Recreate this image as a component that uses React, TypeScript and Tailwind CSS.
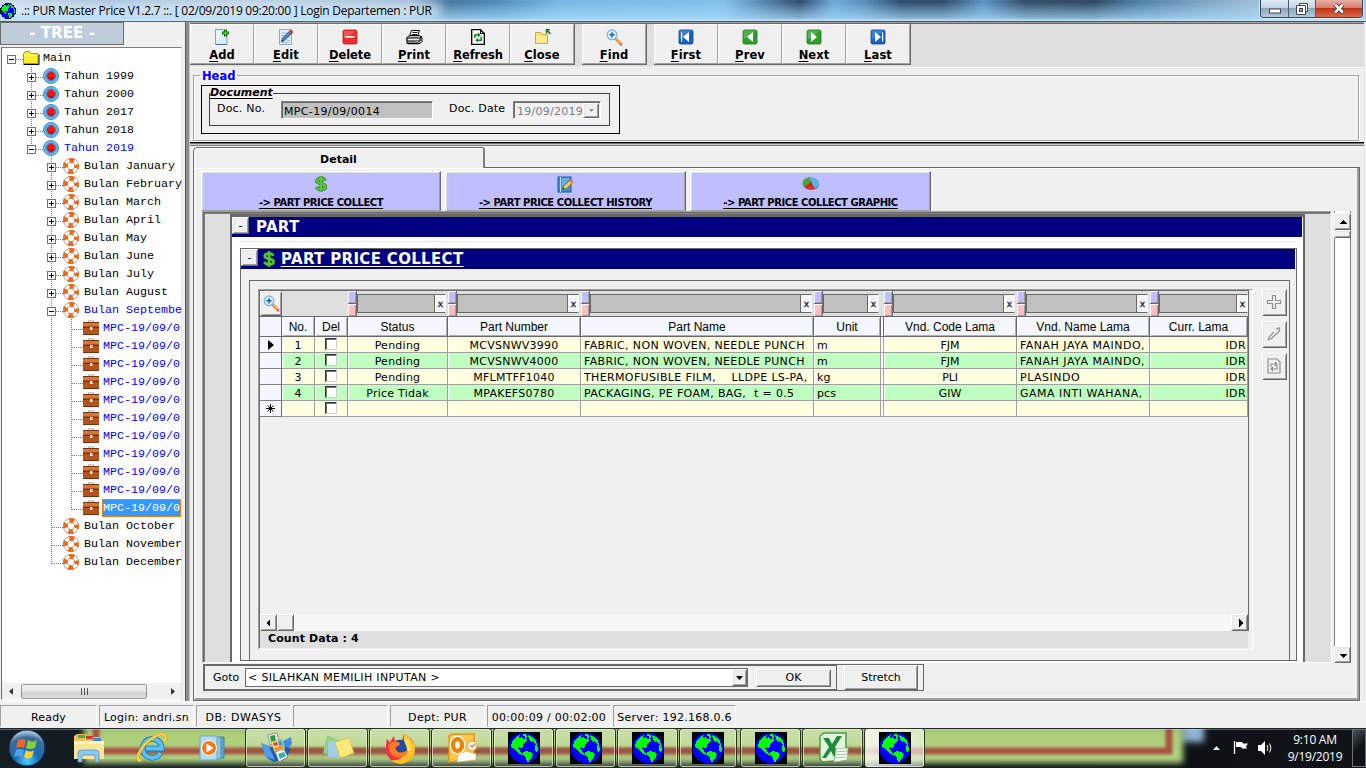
import React from "react";

const verdana = "font-['DejaVu_Sans','Verdana',sans-serif]";
const raised =
  "border border-t-white border-l-white border-r-[#696969] border-b-[#696969] bg-[#f0f0f0] shadow-[inset_1px_1px_0_#e6e6e6,inset_-1px_-1px_0_#a0a0a0]";

/* ---------- icons ---------- */

function Globe({ size = 32, square = false }: { size?: number; square?: boolean }) {
  return (
    <svg width={size} height={size} viewBox="0 0 32 32" shapeRendering="crispEdges" className="shrink-0">
      {square && <rect width="32" height="32" fill="#000" />}
      <circle cx="16" cy="16" r={square ? 15.500 : 16} fill={square ? "#00f" : "#001"} />
      <circle cx="16" cy="16" r="14.6" fill="#0000ff" />
      <path
        fill="#00ff00"
        d="M3 13l2-5 4-4 3-1-1 3 3-1 1 2 3-1 1 2-2 3-2 1v3l-2 1-2-1-1 2 2 1 1 3 2 1-1 1-4-2-3-4-3-1zM15 20l3-1 4 1 3 2-1 3-2 2-1 3-2 0-1-4-3-3zM20 3l4 2 4 4 1 3-2 0-2-3-2 1-2-3zM27 13l2-1 1 5-1 4-2-2z"
      />
      <path fill="#00ff00" d="M15 2h3v1h1v3h-2v-2h-2z" />
    </svg>
  );
}

function Dollar() {
  const d =
    "M12.3 4.800C11.400 3 9.600 2.500 7.800 2.500 5.500 2.500 3.800 3.500 3.800 5.300c0 3.500 8.700 1.800 8.700 5.200 0 1.900-1.900 3-4.300 3-2.200 0-4-.8-4.700-2.600M8.100.3v15.400";
  return (
    <svg width="16" height="16" viewBox="0 0 16 16" fill="none">
      <path d={d} stroke="#207a18" strokeWidth="3.300" />
      <path d={d} stroke="#5cc23c" strokeWidth="2.200" />
    </svg>
  );
}

function Find() {
  return (
    <svg width="17" height="17" viewBox="0 0 17 17" className="shrink-0">
      <path d="M9.500 9.500l6 6" stroke="#e88a1c" strokeWidth="3" />
      <path d="M10 9.500l5 5" stroke="#ffd08a" strokeWidth="1" />
      <path d="M14.500 16l1.500-.5" stroke="#c030c0" strokeWidth="1.500" />
      <circle cx="6" cy="5.800" r="4.800" fill="#d9f0fd" stroke="#86b4d8" strokeWidth="1.300" />
      <path d="M6 3.200v5.200M3.400 5.800h5.200" stroke="#1762b8" strokeWidth="1.500" />
    </svg>
  );
}

function Nav({ kind }: { kind: string }) {
  const blue = kind === "first" || kind === "last";
  const left = kind === "first" || kind === "prev";
  return (
    <svg width="16" height="16" viewBox="0 0 16 16">
      <rect x="1" y="1" width="14" height="14" rx="1.500" fill={blue ? "#1565c8" : "#2f9e2a"} stroke={blue ? "#0d3f86" : "#1a7a1a"} strokeWidth=".8" />
      <path d="M1.500 1.500h13l-13 9z" fill="#fff" opacity=".18" />
      <path d={left ? "M11 3v10L5 8z" : "M5 3v10l6-5z"} fill="#fff" />
      {blue && <rect x={left ? 3 : 12} y="3.500" width="1.200" height="9" fill="#fff" />}
    </svg>
  );
}

function ToolIcon({ name }: { name: string }) {
  switch (name) {
    case "Add":
      return (
        <svg width="16" height="16" viewBox="0 0 16 16">
          <path d="M1.500.500h8l3.500 4v11H1.500z" fill="#dcecfb" stroke="#7f9fc4" />
          <path d="M2.500 2h5L3 12z" fill="#fff" opacity=".8" />
          <path d="M13 15.500H2" stroke="#4d6f9a" />
          <path d="M11.500.500v7M8 4h7" stroke="#0a5a0a" strokeWidth="3" />
          <path d="M11.500 1.300v5.400M8.800 4h5.400" stroke="#46d32c" strokeWidth="1.300" />
        </svg>
      );
    case "Edit":
      return (
        <svg width="16" height="16" viewBox="0 0 16 16">
          <path d="M1.500.500h12v15h-12z" fill="#e4effb" stroke="#8fa6c6" />
          <path d="M3 4h6M3 6.500h5M3 9h3M9 11.500h3M3 13.500h8" stroke="#9db7d6" />
          <path d="M3.500 12.500l1-3.500L12 1.500l2.500 2.300L7 11.300z" fill="#4f83c8" stroke="#28456e" strokeWidth=".7" />
          <path d="M11 2.500L13 .6l2.300 2.200-1.900 2z" fill="#e03a20" />
          <path d="M3.300 12.700l.6-2 1.500 1.400z" fill="#222" />
        </svg>
      );
    case "Delete":
      return (
        <svg width="16" height="16" viewBox="0 0 16 16">
          <rect x="1" y="1" width="14" height="14" rx="1.500" fill="#ef2b2b" stroke="#c41414" strokeWidth=".8" />
          <path d="M2 2h12l-12 8z" fill="#fff" opacity=".2" />
          <rect x="3.500" y="7" width="9" height="1.600" fill="#fff" />
        </svg>
      );
    case "Print":
      return (
        <svg width="17" height="16" viewBox="0 0 17 16">
          <path d="M5.500 1.500h8l-2 6H3.500z" fill="#fff" stroke="#000" />
          <path d="M6.500 3.500h5M6 5.500h5" stroke="#000" strokeWidth=".9" />
          <path d="M1 8.500l2.500-2h10l2.500 2v4l-2 2H1z" fill="#bbb" stroke="#000" />
          <path d="M1 9h13v3H1zM14 9l2-2" fill="#eee" stroke="#000" />
          <rect x="9" y="12" width="3" height="1.500" fill="#1bd61b" />
          <path d="M2 14.500h11" stroke="#000" strokeWidth="1.500" />
        </svg>
      );
    case "Refresh":
      return (
        <svg width="14" height="16" viewBox="0 0 14 16">
          <path d="M.700.700h8.800l3.800 3.800v10.800H.7z" fill="#fff" stroke="#000" strokeWidth="1.300" />
          <path d="M9.500.700v3.800h3.800" fill="none" stroke="#000" />
          <path d="M3.800 9V6h4M10.200 7.500v3.700H6" fill="none" stroke="#12851c" strokeWidth="1.500" />
          <path d="M7 3.500L9.800 6 7 8.300zM7 8.900l-2.800 2.300L7 13.600z" fill="#12851c" />
        </svg>
      );
    case "Close":
      return (
        <svg width="17" height="16" viewBox="0 0 17 16">
          <path d="M1.500 14.500v-11h5l1.500 2h5.500v9z" fill="#ffe680" stroke="#d2a72c" />
          <path d="M2 7h11v7H2z" fill="#fff0a0" opacity=".5" />
          <path d="M12 .5h4M12.500 0v4.500M13 1l3.500 4" stroke="#1a7a1a" strokeWidth="1.500" />
        </svg>
      );
    case "Find":
      return <Find />;
    default:
      return <Nav kind={name.toLowerCase()} />;
  }
}

function NotePen() {
  return (
    <svg width="17" height="17" viewBox="0 0 17 17">
      <rect x="1" y="1" width="13" height="15" fill="#3a8fd6" stroke="#1c5c98" />
      <path d="M3.500 1v15" stroke="#bfe0f8" />
      <path d="M5 2h8L5 11z" fill="#8cc6f0" opacity=".6" />
      <path d="M6 13.500l1-3.500 6.500-6 2.300 2.200-6.500 6.300z" fill="#ffc94a" stroke="#b0701a" strokeWidth=".6" />
      <path d="M12.500 4.700l1.500-1.500 2.300 2.300-1.300 1.400z" fill="#e86a2a" />
      <path d="M5.700 13.800l.8-2 1.400 1.300z" fill="#222" />
    </svg>
  );
}

function Pie() {
  return (
    <svg width="18" height="16" viewBox="0 0 18 16">
      <ellipse cx="9" cy="8.500" rx="8" ry="5.500" fill="#777" />
      <ellipse cx="9" cy="7" rx="8" ry="5.800" fill="#58b4ea" />
      <path d="M9 6.500L8 1.200A8 5.800 0 0 0 2.200 10.500z" fill="#46a832" />
      <path d="M9 5.500L2.500 10.500A8 5.800 0 0 0 12.500 13z" fill="#ee2a1a" />
      <path d="M9 5.500v2.500l3 4M9 8l-4 3" stroke="#7c1008" fill="none" strokeWidth=".7" />
    </svg>
  );
}

/* ---------- tree ---------- */

type Node = { label: string; level: number; exp?: "+" | "-"; blue?: boolean; sel?: boolean; lines: number[]; last?: boolean };

const months = ["January", "February", "March", "April", "May", "June", "July", "August"];
const nodes: Node[] = [
  { label: "Main", level: 0, exp: "-", lines: [] },
  ...["1999", "2000", "2017", "2018"].map((y) => ({ label: "Tahun " + y, level: 1, exp: "+" as const, lines: [31] })),
  { label: "Tahun 2019", level: 1, exp: "-", blue: true, lines: [31], last: true },
  ...months.map((m) => ({ label: "Bulan " + m, level: 2, exp: "+" as const, lines: [51] })),
  { label: "Bulan Septembe", level: 2, exp: "-", blue: true, lines: [51] },
  ...Array.from({ length: 11 }, (_, i) => ({ label: "MPC-19/09/0", level: 3, blue: true, sel: i === 10, lines: [51, 71], last: i === 10 })),
  { label: "Bulan October", level: 2, lines: [51] },
  { label: "Bulan November", level: 2, lines: [51] },
  { label: "Bulan December", level: 2, lines: [51], last: true },
];

function NodeArt({ n }: { n: Node }) {
  const ex = 12 + 20 * n.level;
  const ix = 23 + 20 * n.level;
  return (
    <svg width={100} height={18} viewBox="0 0 100 18" className="absolute top-0 left-0">
      {n.lines.map((x, i) => (
        <line
          key={x}
          x1={x - 1.5}
          x2={x - 1.5}
          y1={0}
          y2={n.last && i === n.lines.length - 1 ? 11 : 18}
          stroke="#777"
          strokeDasharray="1 1"
        />
      ))}
      <line x1={ex - 2} x2={ix} y1={10.5} y2={10.5} stroke="#777" strokeDasharray="1 1" />
      {n.exp && (
        <g>
          <rect x={ex - 6.5} y={6.500} width="8" height="8" fill="#fff" stroke="#707070" />
          <path d={`M${ex - 5} 10.500h5`} stroke="#000" />
          {n.exp === "+" && <path d={`M${ex - 2.5} 8v5`} stroke="#000" />}
        </g>
      )}
      <g transform={`translate(${ix - 2} 1)`}>
        {n.level === 0 && (
          <g>
            <path d="M.500 13.500v-10l2-2h4l1.500 2h7v10z" fill="#f6ee30" stroke="#999936" />
            <path d="M.500 14.500h15.500v-10" stroke="#000" fill="none" />
            <path d="M1.500 5.500h13" stroke="#fffbb0" />
          </g>
        )}
        {n.level === 1 && (
          <g>
            <circle cx="8" cy="8" r="7.600" fill="#62b8ec" stroke="#2c80bf" strokeWidth=".8" />
            <circle cx="8" cy="8" r="4.800" fill="#8ed0f4" stroke="#2a86c8" strokeWidth="1" />
            <circle cx="8" cy="8" r="4.200" fill="#f01414" />
            <path d="M5 9.500a4 4 0 0 0 6 0" stroke="#a00" fill="none" />
          </g>
        )}
        {n.level === 2 && (
          <g fill="none">
            <circle cx="8" cy="8" r="5.600" stroke="#999" strokeWidth="4.800" />
            <circle cx="8" cy="8" r="5.600" stroke="#fff" strokeWidth="3.400" />
            <circle cx="8" cy="8" r="5.600" stroke="#ee6a18" strokeWidth="4.800" strokeDasharray="4.800 3.996" strokeDashoffset="2.400" />
          </g>
        )}
        {n.level === 3 && (
          <g>
            <path d="M5.500 3V.800h5V3" fill="none" stroke="#9fb0bd" />
            <rect x="0" y="2" width="16" height="13" fill="#b4531e" />
            <path d="M0 3h16v3H0z" fill="#d07a3a" />
            <path d="M0 7.500h16M0 14.500h16M0 2.500h16" stroke="#7a300e" />
            <rect x="7" y="7" width="2.500" height="3" fill="#eee" />
          </g>
        )}
      </g>
    </svg>
  );
}

function Tree() {
  return (
    <div className="flex h-[679px] w-[185px] shrink-0 flex-col bg-[#f0f0f0]">
      <div className={`h-[23px] w-[124px] border border-[#696969] bg-[#bfcddb] text-center text-[15px] leading-[20px] font-bold tracking-[0.1px] text-white ${verdana}`}>
        - TREE -
      </div>
      <div className="mt-[2px] ml-[1px] flex h-[653px] w-[181px] flex-col border border-t-[#808080] border-r-[#e3e3e3] border-b-white border-l-[#696969] bg-white">
        <div className="mt-[1px] h-[635px] font-['Liberation_Mono','Courier_New',monospace] text-[11.67px] leading-[19px] whitespace-pre">
          {nodes.map((n, i) => (
            <div key={i} className="relative flex h-[18px]">
              <NodeArt n={n} />
              <span
                className={[
                  ["ml-[41px]", "ml-[62px]", "ml-[82px]", "ml-[100px]"][n.level],
                  n.sel ? "h-[18px] w-[79px] border border-dotted border-[#f09020] bg-[#3399ff] leading-[17px] text-white" : n.blue ? "text-[#0000ff]" : "text-black",
                  n.level === 3 && !n.sel ? "pl-[1px]" : "",
                ].join(" ")}
              >
                {n.label}
              </span>
            </div>
          ))}
        </div>
        <div className="flex h-[16px] items-center bg-[#f0f0f0]">
          <svg width="19" height="9" viewBox="0 0 19 9">
            <path d="M11 1v7L7 4.500z" fill="#333" />
          </svg>
          <div className="flex h-[15px] w-[126px] items-center justify-center gap-[2px] rounded-[2px] border border-[#979797] bg-[linear-gradient(#f4f4f4,#e4e4e4_50%,#cfcfcf_51%,#dcdcdc)]">
            {[0, 1, 2].map((k) => (
              <span key={k} className="h-[7px] w-[1px] bg-[#555]" />
            ))}
          </div>
          <svg width="34" height="9" viewBox="0 0 34 9">
            <path d="M24 1v7l4-3.500z" fill="#333" />
          </svg>
        </div>
      </div>
    </div>
  );
}

/* ---------- toolbar and head ---------- */

const groups: { items: string[]; cls: string }[] = [
  { items: ["Add", "Edit", "Delete", "Print", "Refresh", "Close"], cls: "" },
  { items: ["Find"], cls: "ml-[7px]" },
  { items: ["First", "Prev", "Next", "Last"], cls: "ml-[7px]" },
];

function Toolbar() {
  return (
    <div className="flex h-[43px] bg-[#dfdfdf]">
      {groups.map((g, i) => (
        <div key={i} className={`flex h-[41px] border-r border-b border-[#696969] bg-[#f0f0f0] ${g.cls}`}>
          {g.items.map((t) => (
            <div
              key={t}
              className="flex w-[64px] flex-col items-center border border-t-white border-r-[#a0a0a0] border-b-[#a0a0a0] border-l-white pt-[4px]"
            >
              <div className="flex h-[16px] shrink-0 items-center">
                <ToolIcon name={t} />
              </div>
              <span className={`mt-px shrink-0 text-[11.5px] leading-[18px] font-bold ${t === "Refresh" || t === "Delete" ? "tracking-[-0.1px]" : "tracking-[0.1px]"}`}>
                <span className="underline underline-offset-2">{t[0]}</span>
                {t.slice(1)}
              </span>
            </div>
          ))}
        </div>
      ))}
    </div>
  );
}

function Head() {
  return (
    <div className="h-[73px] bg-[#f0f0f0] pt-[6px] pl-[3px]">
      <div className="relative h-[66px] w-[1166px] border border-[#a0a0a0] pt-[9px] pl-[7px] shadow-[inset_1px_1px_0_#fff,1px_1px_0_#fff]">
        <span className="absolute -top-[7px] left-[6px] bg-[#f0f0f0] px-[2px] text-[11.5px] leading-[15px] font-bold text-[#0000ff]">Head</span>
        <div className="h-[49px] w-[419px] border border-black pt-[7px] pl-[7px]">
          <div className="relative flex h-[33px] w-[401px] border border-[#404040] text-[11px]">
            <span className="absolute -top-[8px] left-0 bg-[#f0f0f0] text-[11px] leading-[14px] font-bold tracking-[-0.05px] italic underline underline-offset-2">Document</span>
            <span className="mt-[7px] ml-[7px] w-[64px] leading-[15px] tracking-[0.2px]">Doc. No.</span>
            <span className="mt-[7px] h-[18px] w-[152px] border border-t-[#808080] border-r-white border-b-white border-l-[#808080] bg-[#c0c0c0] pl-[2px] text-[11px] leading-[19px] tracking-[0.35px] shadow-[inset_1px_1px_0_#696969]">
              MPC-19/09/0014
            </span>
            <span className="mt-[7px] ml-[16px] w-[64px] leading-[15px] tracking-[0.2px]">Doc. Date</span>
            <span className="mt-[7px] flex h-[18px] w-[88px] border border-t-[#808080] border-r-white border-b-white border-l-[#808080] pl-[3px] leading-[20px] text-[#808080] shadow-[inset_1px_1px_0_#696969]">
              <span className="w-[66px] tracking-[0.25px]">19/09/2019</span>
              <span className={`mt-px flex h-[15px] w-[16px] items-center justify-center ${raised}`}>
                <svg width="5" height="3" viewBox="0 0 5 3">
                  <path d="M0 0h5L2.500 3z" fill="#909090" />
                </svg>
              </span>
            </span>
          </div>
        </div>
      </div>
    </div>
  );
}

/* ---------- data grid ---------- */

const colW = ["w-[33px]", "w-[33px]", "w-[100px]", "w-[133px]", "w-[233px]", "w-[67px]", "w-[136px]", "w-[133px]", "w-[98px]"];
const heads = ["No.", "Del", "Status", "Part Number", "Part Name", "Unit", "Vnd. Code Lama", "Vnd. Name Lama", "Curr. Lama"];
const data = [
  ["1", "", "Pending", "MCVSNWV3990", "FABRIC, NON WOVEN, NEEDLE PUNCH", "m", "FJM", "FANAH JAYA MAINDO,", "IDR"],
  ["2", "", "Pending", "MCVSNWV4000", "FABRIC, NON WOVEN, NEEDLE PUNCH", "m", "FJM", "FANAH JAYA MAINDO,", "IDR"],
  ["3", "", "Pending", "MFLMTFF1040", "THERMOFUSIBLE FILM,    LLDPE LS-PA,", "kg", "PLI", "PLASINDO", "IDR"],
  ["4", "", "Price Tidak", "MPAKEFS0780", "PACKAGING, PE FOAM, BAG,  t = 0.5", "pcs", "GIW", "GAMA INTI WAHANA,", "IDR"],
  ["", "", "", "", "", "", "", "", ""],
];
const align = ["justify-center", "justify-center", "justify-center", "justify-center", "justify-start pl-[3px]", "justify-start pl-[3px]", "justify-center", "justify-start pl-[3px]", "justify-end pr-[1px]"];
const track = ["", "", "tracking-[0.25px]", "tracking-[0.25px]", "tracking-[0.36px]", "tracking-[0.1px]", "tracking-[-0.1px]", "tracking-[0.5px]", "tracking-[0.4px]"];

function FilterCell({ w, tail }: { w: string; tail?: boolean }) {
  return (
    <div className={`flex h-[25px] ${w}`}>
      <div className="flex w-[9px] flex-col border-r border-[#696969]">
        <span className="h-[12px] border-t border-l border-white bg-[#bfbfff] shadow-[inset_-1px_-1px_0_#a0a0a0]" />
        <span className="h-px bg-[#696969]" />
        <span className="h-[12px] border-t border-l border-white bg-[#ffbfbf] shadow-[inset_-1px_-1px_0_#a0a0a0]" />
      </div>
      <div className={`mt-[3px] flex h-[19px] grow border border-[#696969] border-r-white bg-[#c0c0c0] ${tail ? "mr-0" : "mr-[2px]"}`}>
        <span className="grow border-r border-[#696969]" />
        <span className="w-[10px] border-l border-white bg-[#f6f6f6] text-center text-[9px] leading-[19px] text-[#101038] [-webkit-text-stroke:0.3px_#101038]">x</span>
      </div>
    </div>
  );
}

function Grid() {
  return (
    <div className="flex h-[361px] w-[995px] flex-col border border-t-[#a0a0a0] border-r-white border-b-white border-l-[#a0a0a0]">
      <div className="flex h-[341px] w-[990px] flex-col border border-b-0 border-[#696969]">
        <div className="flex h-[25px] bg-[#dfdfdf]">
          <div className={`flex w-[22px] items-center justify-center ${raised}`}>
            <Find />
          </div>
          <div className="w-[66px]" />
          {colW.slice(2).map((w, i) => (
            <FilterCell key={i} w={i === 4 ? "w-[136px] pl-[3px]" : w} tail={i === 6} />
          ))}
        </div>
        <div className="flex h-[21px] border-t border-b border-[#696969] bg-[#f4f7fd] font-['Liberation_Sans',Arial,sans-serif] text-[12px]">
          <div className="w-[22px] shrink-0 border-r border-[#696969]" />
          {heads.map((h, i) => (
            <div key={h} className={`flex shrink-0 ${colW[i]}`}>
              {i === 6 && <span className="w-[3px] border-r border-[#696969] bg-white" />}
              <span className="flex grow items-center justify-center border-r border-[#696969] shadow-[inset_1px_1px_0_#fff,inset_-1px_-1px_0_#b0b0b8]">{h}</span>
            </div>
          ))}
        </div>
        {data.map((r, ri) => (
          <div key={ri} className={`flex h-[16px] text-[11px] leading-[17px] whitespace-pre ${ri % 2 ? "bg-[#bfffbf]" : "bg-[#ffffdf]"}`}>
            <div className="flex w-[22px] shrink-0 items-center justify-center border-r border-b border-[#696969] border-b-[#808080] bg-[#f4f7fd] shadow-[inset_1px_1px_0_#fff]">
              {ri === 0 && (
                <svg width="6" height="10" viewBox="0 0 6 10">
                  <path d="M0 0v10l6-5z" fill="#000" />
                </svg>
              )}
              {ri === 4 && (
                <svg width="9" height="9" viewBox="0 0 9 9">
                  <path d="M4.500 0v9M0 4.500h9M1.500 1.500l6 6M7.500 1.500l-6 6" stroke="#000" strokeWidth="1" />
                </svg>
              )}
            </div>
            {r.map((c, i) => (
              <div key={i} className={`flex shrink-0 ${colW[i]}`}>
                {i === 6 && <span className="w-[3px] border-r border-b border-[#a0a0a0] bg-white" />}
                <span className={`flex min-w-0 grow border-r border-b border-[#a0a0a0] shadow-[inset_1px_0_0_#fff] ${align[i]} ${track[i]}`}>
                  {i === 1 ? (
                    <span className="mt-[1px] h-[12px] w-[12px] border border-t-[#303030] border-r-[#d0d0d0] border-b-[#d0d0d0] border-l-[#303030] bg-white shadow-[inset_1px_1px_0_#777]" />
                  ) : (
                    c
                  )}
                </span>
              </div>
            ))}
          </div>
        ))}
        <div className="grow" />
        <div className="flex h-[17px] justify-between bg-[repeating-conic-gradient(#ffffff_0_25%,#f0f0f0_0_50%)] bg-[length:2px_2px]">
          <div className="flex">
            <Arrow dir="left" />
            <div className={`h-[17px] w-[17px] ${raised}`} />
          </div>
          <Arrow dir="right" />
        </div>
      </div>
      <div className="h-[17px] w-[989px] border-l border-[#696969] bg-[#dfdfdf] pl-[8px] text-[11px] leading-[15px] font-bold tracking-[0.1px]">Count Data : 4</div>
    </div>
  );
}

function Arrow({ dir }: { dir: "left" | "right" | "up" | "down" }) {
  const d = { left: "M8 3v8L4 7z", right: "M6 3v8l4-4z", up: "M3 9h8L7 5z", down: "M3 6h8l-4 4z" }[dir];
  return (
    <div className={`flex h-[17px] w-[17px] shrink-0 items-center justify-center ${raised}`}>
      <svg width="14" height="14" viewBox="0 0 14 14" shapeRendering="crispEdges">
        <path d={d} fill="#000" />
      </svg>
    </div>
  );
}

function SideButtons() {
  return (
    <div className="ml-[9px] flex flex-col gap-[5px]">
      {[0, 1, 2].map((k) => (
        <div key={k} className={`flex h-[27px] w-[25px] items-center justify-center pr-[2px] pb-[2px] ${raised}`}>
          <svg width="16" height="16" viewBox="0 0 16 16" fill="none" stroke="#909090" strokeWidth="1.200" className="shrink-0">
            {k === 0 && <path d="M6.500 1.500h3v5h5v3h-5v5h-3v-5h-5v-3h5z" />}
            {k === 1 && <path d="M2 14l1.500-3.500L8 6M2 14l3.500-1.500L14 4.500M10 2.500l2 1M11 2h2.500v3" />}
            {k === 2 && <path d="M2 1h9l3 3v11H2zM5 9V6h5M11 7v4H6M9 4l2 2-2 2M7 9l-2 2 2 2" />}
          </svg>
        </div>
      ))}
    </div>
  );
}

/* ---------- detail page ---------- */

const links = [
  { t: "-> PART PRICE COLLECT", icon: <Dollar />, w: "w-[240px]" },
  { t: "-> PART PRICE COLLECT HISTORY", icon: <NotePen />, w: "ml-[4px] w-[241px]" },
  { t: "-> PART PRICE COLLECT GRAPHIC", icon: <Pie />, w: "ml-[4px] w-[241px]" },
];

function Minus() {
  return <div className={`flex h-[17px] w-[17px] shrink-0 items-center justify-center text-[11px] leading-none text-black ${raised}`}>-</div>;
}

function Viewport() {
  return (
    <div className="ml-px h-[452px] w-[1130px] border-t border-r border-b border-l border-t-[#a0a0a0] border-r-white border-b-white border-l-[#a0a0a0]">
      <div className="h-[450px] border border-r-[#e3e3e3] border-b-0 border-[#696969] bg-[#dfdfdf]">
        <div className="flex h-[449px] flex-col border-t border-l border-[#808080] pl-[25px]">
          <div className="h-[448px] w-[1075px] overflow-hidden border-t-3 border-r-2 border-l-2 border-[#696969] bg-white">
            <div className="flex h-[20px] w-[1070px] bg-[#000080]">
              <Minus />
              <span className="ml-[7px] text-[15px] leading-[20px] font-bold tracking-[0.3px] text-white">PART</span>
            </div>
            <div className="mt-[4px] ml-[8px] h-px w-[1057px] bg-[#e8e8e8]" />
            <div className="mt-[6px] ml-[8px] h-[413px] w-[1057px] border border-[#696969] bg-[#f0f0f0]">
              <div className="flex h-[20px] w-[1054px] items-start bg-[#000080]">
                <Minus />
                <span className="mt-[2px] ml-[3px]">
                  <Dollar />
                </span>
                <span className="ml-[4px] text-[15px] leading-[20px] font-bold tracking-[0.33px] text-white underline underline-offset-2">PART PRICE COLLECT</span>
              </div>
              <div className="mt-[11px] ml-[8px] flex h-[381px] w-[1041px] items-start border border-[#696969] pt-[8px] pl-[8px]">
                <Grid />
                <SideButtons />
              </div>
            </div>
          </div>
        </div>
      </div>
    </div>
  );
}

function GotoBar() {
  return (
    <div className="mt-px ml-[2px] flex h-[27px] w-[721px] border border-[#696969] text-[11px] leading-[17px]">
      <div className="flex w-[633px] items-center border border-r border-[#696969] pl-[8px]">
        <span className="w-[32px] pb-px">Goto</span>
        <div className="flex h-[19px] w-[503px] border border-[#696969] bg-white pl-[2px] leading-[18px]">
          <span className="grow tracking-[0.35px]">&lt; SILAHKAN MEMILIH INPUTAN &gt;</span>
          <span className={`flex w-[15px] items-center justify-center ${raised}`}>
            <svg width="7" height="4" viewBox="0 0 7 4">
              <path d="M0 0h7L3.500 4z" fill="#000" />
            </svg>
          </span>
        </div>
        <div className={`ml-[8px] flex h-[18px] w-[75px] items-center justify-center ${raised}`}>OK</div>
      </div>
      <div className="w-[7px]" />
      <div className={`flex w-[74px] items-center justify-center ${raised}`}>Stretch</div>
    </div>
  );
}

function Detail() {
  return (
    <div className="h-[555px] bg-[#f0f0f0] pt-px pl-[3px]">
      <div className="flex h-[21px]">
        <div className="flex h-[21px] w-[292px] items-center justify-center rounded-tl-[5px] rounded-tr-[3px] border-t border-r-2 border-l border-t-[#696969] border-r-[#808080] border-l-[#696969] text-[11px] font-bold shadow-[inset_1px_1px_0_#fff]">
          <span className="pt-[4px]">Detail</span>
        </div>
        <div className="w-[875px] border-b border-[#696969]" />
      </div>
      <div className="flex h-[533px] w-[1167px] flex-col border-r border-b border-l border-[#696969]">
        <div className="flex h-[532px] flex-col border-r-2 border-b-2 border-l border-r-[#a0a0a0] border-b-[#a0a0a0] border-l-white pt-[3px] pl-[6px] shadow-[inset_0_1px_0_#fff]">
          <div className="flex h-[40px]">
            {links.map((l) => (
              <div
                key={l.t}
                className={`flex h-[40px] flex-col items-center border border-t-white border-r-[#696969] border-b-[#a0a0a0] border-l-white bg-[#bfbfff] pt-[3px] shadow-[inset_-1px_0_0_#a0a0a0,inset_1px_1px_0_#dfdfdf] ${l.w}`}
              >
                <span className="flex h-[18px] items-center">{l.icon}</span>
                <span className="mt-[3px] text-[10px] leading-[13px] font-bold tracking-[-0.45px] whitespace-nowrap underline underline-offset-2">{l.t}</span>
              </div>
            ))}
          </div>
          <div className="flex">
            <Viewport />
            <div className="ml-[2px] flex h-[452px] w-[17px] flex-col border-r border-l border-[#808080] bg-white pt-[2px]">
              <div className="-mx-px flex grow flex-col justify-between">
                <div>
                  <Arrow dir="up" />
                  <div className={`h-[8px] w-[17px] ${raised}`} />
                </div>
                <Arrow dir="down" />
              </div>
            </div>
          </div>
          <GotoBar />
          <div className="mt-px ml-px h-px w-[1151px] bg-[#e3e3e3]" />
        </div>
      </div>
    </div>
  );
}

/* ---------- bottom ---------- */

const status = [
  { t: "Ready", w: "w-[97px] tracking-[0.2px]" },
  { t: "Login: andri.sn", w: "w-[95px] tracking-[0.25px]" },
  { t: "DB: DWASYS", w: "w-[95px] tracking-[0.6px]" },
  { t: "", w: "w-[95px]" },
  { t: "Dept: PUR", w: "w-[95px] tracking-[0.3px]" },
  { t: "00:00:09 / 00:02:00", w: "w-[124px] tracking-[0.25px]" },
  { t: "Server: 192.168.0.6", w: "w-[123px] tracking-[0.27px]" },
];

function TaskIcon({ k }: { k: string }) {
  switch (k) {
    case "folder":
      return (
        <svg width="34" height="32" viewBox="0 0 34 32">
          <path d="M2 27V4l3-2h9l2 3h13l2 3v19z" fill="#e9bf58" />
          <path d="M6 3h7v3H6z" fill="#3fae49" />
          <path d="M14 4h7v3h-7z" fill="#d23c2a" />
          <path d="M21 6h8v3h-8z" fill="#3c86d6" />
          <path d="M2 9h30v18H2z" fill="#fbe59a" />
          <path d="M2 9h30v3H2z" fill="#fdf3c4" />
          <path d="M6 30v-9q0-3 3-3h15q3 0 3 3v9h-4v-6q0-1-1-1H11q-1 0-1 1v6z" fill="#8cc9ef" stroke="#4f94c4" strokeWidth=".8" />
        </svg>
      );
    case "ie":
      return (
        <svg width="32" height="32" viewBox="0 0 32 32">
          <path d="M24.500 21a9.500 9.500 0 1 1 1.200-4.500H10" fill="none" stroke="#1a7cc4" strokeWidth="5.600" />
          <path d="M24.500 21a9.500 9.500 0 1 1 1.200-4.500H10" fill="none" stroke="#5cc0f2" strokeWidth="3.800" />
          <path d="M5 28C-2 31 3 15 15 7S32 2 28 10" fill="none" stroke="#d99a10" strokeWidth="3.200" />
          <path d="M5 28C-2 31 3 15 15 7S32 2 28 10" fill="none" stroke="#ffd84a" strokeWidth="2" />
        </svg>
      );
    case "media":
      return (
        <svg width="30" height="28" viewBox="0 0 30 28">
          <path d="M10 4l17-1v21l-17 1z" fill="#5fa6cf" stroke="#3d7ea8" />
          <path d="M7 3l17 0v22H7z" fill="#8cc6e6" stroke="#4a8fb8" />
          <path d="M3 2h17v24H3z" fill="#b4dcf0" stroke="#6aa6c8" />
          <circle cx="12" cy="14" r="7.500" fill="#f27a1a" stroke="#fff" />
          <path d="M9.500 9.500v9l7-4.500z" fill="#fff" />
        </svg>
      );
    case "scan":
      return (
        <svg width="34" height="32" viewBox="0 0 34 32">
          <path d="M2 11l8 3 6 14-9-3zM24 9l8-4 1 7-7 8z" fill="#3d8fe4" />
          <path d="M4 13l8 2 16 0 4 2-6 10-11 3-7-4z" fill="#1a5cb0" />
          <path d="M9 3l9-2 2 9-9 3z" fill="#f2f6f2" stroke="#777" strokeWidth=".7" />
          <path d="M11 4l5-1 1 6-5 1z" fill="#2e9a40" />
          <path d="M12 10l11-3 3 10-10 4z" fill="#ffe080" stroke="#999" strokeWidth=".7" />
          <path d="M14 11l4-1 1 3-4 1z" fill="#e04028" />
          <path d="M19 9l3-1 2 5-4 1z" fill="#38a0e8" />
          <path d="M15 16l9-3 1 3-9 3z" fill="#f09030" />
          <path d="M16 20l9-3 4 8-9 5z" fill="#eef6fc" stroke="#666" strokeWidth=".7" />
          <path d="M19 22l6-2 2 4-6 3z" fill="#35b0a0" />
          <path d="M2 11l8 3 6 14-9-3z" fill="#4f9cf0" />
        </svg>
      );
    case "notes":
      return (
        <svg width="34" height="30" viewBox="0 0 34 30">
          <path d="M6 2l16 7-7 14L2 20z" fill="#8ed08a" />
          <path d="M7 8h14v16H7z" fill="#a4cdf0" opacity=".9" />
          <path d="M14 9l14-4 5 15-14 5z" fill="#ffe87a" stroke="#d8b030" strokeWidth=".6" />
        </svg>
      );
    case "firefox":
      return (
        <svg width="32" height="32" viewBox="0 0 32 32">
          <path d="M3 7l3 3 4-6 1 5 7-1 2-6c7 3 11 8 11 15a14.500 14.500 0 0 1-29 0c0-4 0-7 1-10z" fill="#f0304a" />
          <path d="M20 2c7 3 11 9 11 15a14.500 14.500 0 0 1-24 11c9 1 14-3 14-11z" fill="#ffc02a" />
          <circle cx="16" cy="16" r="8.200" fill="#2448a4" />
          <path d="M5 12c3-3 7-3 9-2 3 1 2 3 0 4-3 1-3 3-1 5 3 3 7 1 11-1-1 6-7 9-13 7C6 22 4 17 5 12z" fill="#ff7a20" />
          <path d="M20 4c5 3 8 8 7 15l-4 0c1-5-4-8-3-15z" fill="#ffe04a" />
        </svg>
      );
    case "outlook":
      return (
        <svg width="32" height="30" viewBox="0 0 32 30">
          <path d="M3 3l3-2h22v25L3 29z" fill="#fbc94a" stroke="#e8960c" strokeWidth="1.500" />
          <path d="M12 22l8-4 10 3v6l-19 2z" fill="#fff" stroke="#d0b070" strokeWidth=".8" />
          <ellipse cx="11.500" cy="12" rx="4.500" ry="6" fill="#fff" stroke="#fff" strokeWidth="7" />
          <ellipse cx="11.500" cy="12" rx="4.500" ry="6" fill="#fff" stroke="#e8860c" strokeWidth="4.500" />
          <circle cx="26" cy="13" r="4.800" fill="#fff5e0" stroke="#e0a030" />
          <path d="M24 12l2 2 2.500-3" fill="none" stroke="#e03020" />
        </svg>
      );
    case "excel":
      return (
        <svg width="32" height="32" viewBox="0 0 32 32">
          <path d="M3 4l4-3h22v27l-24 2-2-3z" fill="#e4f3de" stroke="#4e9a44" strokeWidth="1.500" />
          <path d="M6 6h6l3 6 5-8h5l-7 11 5 10h-6l-3-6-5 7H5l7-11z" fill="#1f8a38" />
          <path d="M19 17l12-1-1 12-13 2z" fill="#f8fcf8" stroke="#8aba84" strokeWidth=".7" />
          <path d="M18 20l12-1M18 23l12-1M17 26l12-1" stroke="#8aba84" strokeWidth=".8" />
        </svg>
      );
    default:
      return <Globe size={32} square />;
  }
}

const tasks: { k: string; w: string; active?: boolean }[] = [
  { k: "scan", w: "w-[59px]" },
  { k: "notes", w: "ml-[3px] w-[59px]" },
  { k: "firefox", w: "ml-[3px] w-[59px]" },
  { k: "outlook", w: "ml-[3px] w-[59px]" },
  { k: "g", w: "ml-[3px] w-[59px]" },
  { k: "g", w: "ml-[3px] w-[59px]" },
  { k: "g", w: "ml-[3px] w-[59px]" },
  { k: "g", w: "ml-[3px] w-[56px]" },
  { k: "g", w: "ml-[5px] w-[59px]" },
  { k: "excel", w: "ml-[3px] w-[59px]" },
  { k: "g", w: "ml-[3px] w-[59px]", active: true },
];

function Taskbar() {
  return (
    <div className="relative flex h-[40px] overflow-hidden bg-[#0c1218]">
      <svg className="absolute top-0 left-0" width="1366" height="40" viewBox="0 0 1366 40">
        <defs>
          <filter id="soft" x="-5%" y="-50%" width="110%" height="200%">
            <feGaussianBlur stdDeviation="3" />
          </filter>
          <filter id="soft2" x="-5%" y="-50%" width="110%" height="200%">
            <feGaussianBlur stdDeviation="1.600" />
          </filter>
          <linearGradient id="gr" x1="0" y1="0" x2="0" y2="1">
            <stop offset="0" stopColor="#7f9f74" />
            <stop offset=".25" stopColor="#aece78" />
            <stop offset="1" stopColor="#b4d884" />
          </linearGradient>
          <linearGradient id="dk" x1="0" y1="0" x2="1" y2="0">
            <stop offset="0" stopColor="#141c24" />
            <stop offset=".7" stopColor="#0c1014" />
            <stop offset="1" stopColor="#101418" />
          </linearGradient>
        </defs>
        <rect width="1366" height="40" fill="url(#dk)" />
        <g filter="url(#soft)">
          <rect x="84" y="-6" width="1099" height="41" fill="url(#gr)" />
          <rect x="1184" y="-6" width="20" height="20" fill="#93b4d8" />
        </g>
        <path d="M96 -4v27M90 23h1079v-27" fill="none" stroke="#a63c38" strokeWidth="7" filter="url(#soft2)" opacity=".85" />
        <rect width="1366" height="1" fill="#1c262c" />
        <rect y="1" width="1366" height="1" fill="#fff" opacity=".3" />
      </svg>
      <div className="relative flex h-[40px] w-[246px] items-center">
        <svg className="ml-[8px] shrink-0" width="38" height="38" viewBox="0 0 38 38">
          <defs>
            <radialGradient id="orb" cx=".5" cy=".85" r=".8">
              <stop offset="0" stopColor="#4fd0ff" />
              <stop offset=".4" stopColor="#1a6cb4" />
              <stop offset=".8" stopColor="#3a6a98" />
              <stop offset="1" stopColor="#a8c4dc" />
            </radialGradient>
          </defs>
          <circle cx="19" cy="19" r="18" fill="url(#orb)" stroke="#0a2a4a" />
          <path d="M10 11q4-2 8 0l-2 8q-4-2-8 0z" fill="#f0642a" />
          <path d="M20 11q4 3 9 0l-2 8q-5 2-9 0z" fill="#8ccb3a" />
          <path d="M8 21q4-2 8 0l-2 7q-4-2-8 0z" fill="#4aa6e8" />
          <path d="M18 21q4 3 8 0l-2 7q-4 3-8 0z" fill="#ffd23a" />
        </svg>
        <span className="ml-[26px]">
          <TaskIcon k="folder" />
        </span>
        <span className="ml-[30px]">
          <TaskIcon k="ie" />
        </span>
        <span className="ml-[29px]">
          <TaskIcon k="media" />
        </span>
      </div>
      <div className="relative flex pt-px">
        {tasks.map((t, i) => (
          <div
            key={i}
            className={`flex h-[38px] items-center justify-center rounded-[3px] border border-[#f0f8e8]/60 shadow-[0_0_0_1px_#27321f] ${t.w} ${
              t.active ? "bg-[linear-gradient(120deg,#ffffffd8,#ffffff80)]" : "bg-[linear-gradient(#ffffff60,#ffffff30_45%,#00000018_50%,#ffffff20)]"
            }`}
          >
            <TaskIcon k={t.k} />
          </div>
        ))}
      </div>
      <div className="relative ml-auto flex items-center font-['Open_Sans','Noto_Sans',sans-serif] text-[12px] leading-[17px] text-white">
        <svg width="66" height="20" viewBox="0 0 66 20">
          <path d="M0 12l3.500-4L7 12z" fill="#eee" />
          <path d="M21.500 3v13" stroke="#fff" strokeWidth="1.300" />
          <path d="M23 4h6l1 1.500h5l-2 3 1 2h-5l-1-1.500h-5z" fill="#fff" />
          <path d="M45 7h3l4-4v14l-4-4h-3z" fill="#fff" />
          <path d="M54 7q1.500 3 0 6M56.500 5.500q2.500 4.500 0 9" fill="none" stroke="#ddd" strokeWidth="1.100" />
        </svg>
        <div className="ml-[3px] w-[66px] text-center tracking-[-0.25px]">
          <div>9:10 AM</div>
          <div>9/19/2019</div>
        </div>
        <div className="ml-[4px] h-[38px] w-[14px] self-center border border-[#6a7278] bg-[linear-gradient(135deg,#4a5258,#101418_50%)]" />
      </div>
    </div>
  );
}

function TitleBar() {
  return (
    <div className="relative flex h-[22px] border-b border-[#42586e] bg-[linear-gradient(90deg,#c8d8ea_0,#a5c1dd_8%,#b9cfe4_18%,#9fbcd8_30%,#4a789f_33%,#5088b8_36%,#7cb8e4_41%,#84c0ea_53%,#5f8fb8_55.5%,#304f70_58.5%,#6fa8d8_61%,#5f94c0_63%,#2f4f70_66%,#304e6c_69%,#5d94c4_72%,#33506c_75%,#304a64_80%,#4d7da4_83%,#7fa5c4_88%,#b0cce2_94%,#a8c8e0_100%)]">
      <div className="absolute inset-0 bg-[linear-gradient(#ffffff00_10%,#a8dcfcb0_85%,#c8e4f8)]" />
      <div className="absolute top-[3px] left-[10px] h-[15px] w-[430px] bg-white/40 blur-[4px]" />
      <div className="relative flex items-center">
        <Globe size={16} />
        <span className="ml-[5px] pt-px font-['Open_Sans','Noto_Sans',sans-serif] text-[12px] leading-[20px] tracking-[-0.25px] whitespace-nowrap text-black">
          .:: PUR Master Price V1.2.7 ::. [ 02/09/2019 09:20:00 ] Login Departemen : PUR
        </span>
      </div>
      <div className="relative mr-[3px] ml-auto flex h-[18px] overflow-hidden rounded-b-[4px] border border-t-0 border-[#34465a] shadow-[0_0_0_1px_#ffffff80]">
        <div className="flex w-[28px] items-center justify-center border-r border-[#4a5c70] bg-[linear-gradient(#e0ebf5,#c0d2e2_48%,#8ea6bc_50%,#b4cadc)]">
          <svg width="12" height="12" viewBox="0 0 12 12">
            <rect x=".5" y="6" width="11" height="4" fill="#fff" stroke="#445" />
          </svg>
        </div>
        <div className="flex w-[27px] items-center justify-center border-r border-[#4a5c70] bg-[linear-gradient(#e0ebf5,#c0d2e2_48%,#8ea6bc_50%,#b4cadc)]">
          <svg width="12" height="12" viewBox="0 0 12 12">
            <path d="M3.500.500h8v8h-8z" fill="#fff" stroke="#445" />
            <path d="M.500 2.500h9v9h-9z" fill="#fff" stroke="#445" />
            <rect x="3.500" y="5.500" width="3" height="3" fill="#8ea6bc" stroke="#445" />
          </svg>
        </div>
        <div className="flex w-[46px] items-center justify-center bg-[linear-gradient(#e8b0a4,#d67c6c_48%,#c0351c_50%,#d86a48)]">
          <svg width="12" height="11" viewBox="0 0 12 11">
            <path d="M2 1.500l8 8M10 1.500l-8 8" stroke="#445" strokeWidth="4.200" />
            <path d="M2.200 1.700l7.600 7.600M9.800 1.700L2.200 9.300" stroke="#fff" strokeWidth="2.400" />
          </svg>
        </div>
      </div>
    </div>
  );
}

export default function App() {
  return (
    <div className={`flex h-[768px] w-[1366px] flex-col overflow-hidden bg-[#f0f0f0] text-black ${verdana}`}>
      <TitleBar />
      <div className="flex h-[679px]">
        <Tree />
        <div className="flex w-[5px] shrink-0">
          <span className="w-px bg-[#e02020]" />
          <span className="w-[3px] bg-[#8c8c8c]" />
          <span className="w-px bg-[#c8c8c8]" />
        </div>
        <div className="w-[1174px]">
          <div className="h-px bg-[#a0a0a0]" />
          <div className="h-px bg-[#696969]" />
          <Toolbar />
          <div className="h-px bg-white" />
          <div className="h-px bg-[#e3e3e3]" />
          <Head />
          <div className="h-px bg-black" />
          <div className="h-px bg-[#2f9e50]" />
          <div className="h-px bg-[#c8c8c8]" />
          <div className="h-px bg-[#808080]" />
          <Detail />
        </div>
        <div className="w-[2px] border-r border-white bg-[#e3e3e3]" />
      </div>
      <div className="flex h-[27px] gap-[2px] border-t border-white pt-[3px] text-[11px] leading-[23px] whitespace-nowrap">
        {status.map((s, i) => (
          <div key={i} className={`h-[22px] border border-t-[#a0a0a0] border-r-white border-b-[#f0f0f0] border-l-[#a0a0a0] text-center ${s.w}`}>
            {s.t}
          </div>
        ))}
      </div>
      <Taskbar />
    </div>
  );
}
